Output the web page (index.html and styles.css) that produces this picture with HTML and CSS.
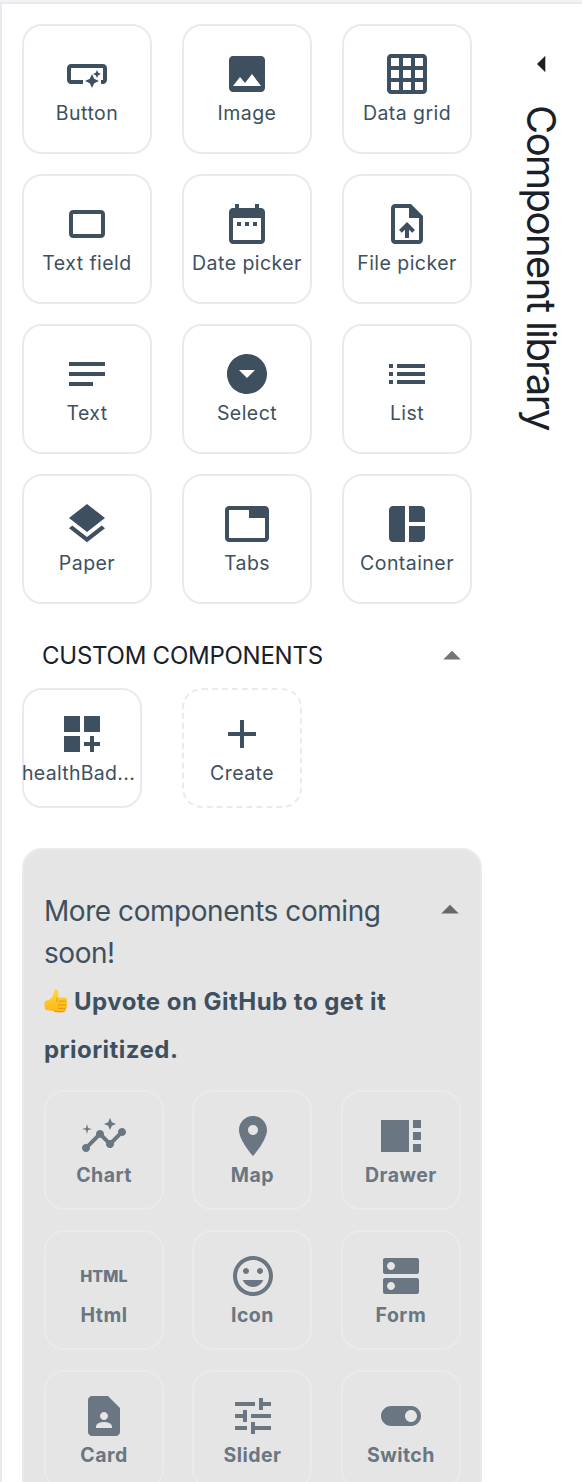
FILE: index.html
```
<!DOCTYPE html>
<html lang="en">
<head>
<meta charset="utf-8">
<title>Component library</title>
<link rel="stylesheet" href="styles.css">
</head>
<body>
<div class="app">
  <main class="catalog">
    <section class="grid">
      <div class="tile"><svg class="icon" viewBox="0 0 24 24"><path d="M22 9v6c0 1.1-.9 2-2 2h-1v-2h1V9H4v6h6v2H4c-1.1 0-2-.9-2-2V9c0-1.1.9-2 2-2h16c1.1 0 2 .9 2 2zm-7.5 10 1.09-2.41L18 15.5l-2.41-1.09L14.5 12l-1.09 2.41L11 15.5l2.41 1.09L14.5 19zm2.5-5 .62-1.38L19 12l-1.38-.62L17 10l-.62 1.38L15 12l1.38.62L17 14z"/></svg><span class="label">Button</span></div>
      <div class="tile"><svg class="icon" viewBox="0 0 24 24"><path d="M21 19V5c0-1.1-.9-2-2-2H5c-1.1 0-2 .9-2 2v14c0 1.1.9 2 2 2h14c1.1 0 2-.9 2-2zM8.5 13.5l2.5 3.01L14.5 12l4.5 6H5l3.5-4.5z"/></svg><span class="label">Image</span></div>
      <div class="tile"><svg class="icon" viewBox="0 0 24 24"><path d="M20 2H4c-1.1 0-2 .9-2 2v16c0 1.1.9 2 2 2h16c1.1 0 2-.9 2-2V4c0-1.1-.9-2-2-2zM8 20H4v-4h4v4zm0-6H4v-4h4v4zm0-6H4V4h4v4zm6 12h-4v-4h4v4zm0-6h-4v-4h4v4zm0-6h-4V4h4v4zm6 12h-4v-4h4v4zm0-6h-4v-4h4v4zm0-6h-4V4h4v4z"/></svg><span class="label">Data grid</span></div>
      <div class="tile"><svg class="icon" viewBox="0 0 24 24"><path d="M19 5H5c-1.1 0-2 .9-2 2v10c0 1.1.9 2 2 2h14c1.1 0 2-.9 2-2V7c0-1.1-.9-2-2-2zm0 12H5V7h14v10z"/></svg><span class="label">Text field</span></div>
      <div class="tile"><svg class="icon" viewBox="0 0 24 24"><path d="M9 11H7v2h2v-2zm4 0h-2v2h2v-2zm4 0h-2v2h2v-2zm2-7h-1V2h-2v2H8V2H6v2H5c-1.11 0-1.99.9-1.99 2L3 20c0 1.1.89 2 2 2h14c1.1 0 2-.9 2-2V6c0-1.1-.9-2-2-2zm0 16H5V9h14v11z"/></svg><span class="label">Date picker</span></div>
      <div class="tile"><svg class="icon" viewBox="0 0 24 24"><path d="M14 2H6c-1.1 0-1.99.9-1.99 2L4 20c0 1.1.89 2 1.99 2H18c1.1 0 2-.9 2-2V8l-6-6zm4 18H6V4h7v5h5v11zM8 15.01l1.41 1.41L11 14.84V19h2v-4.16l1.59 1.59L16 15.01 12.01 11 8 15.01z"/></svg><span class="label">File picker</span></div>
      <div class="tile"><svg class="icon" viewBox="0 0 24 24"><path d="M3 18h12v-2H3v2zM3 6v2h18V6H3zm0 7h18v-2H3v2z"/></svg><span class="label">Text</span></div>
      <div class="tile"><svg class="icon" viewBox="0 0 24 24"><path d="M12 2C6.48 2 2 6.48 2 12s4.48 10 10 10 10-4.48 10-10S17.52 2 12 2zm0 12-4-4h8l-4 4z"/></svg><span class="label">Select</span></div>
      <div class="tile"><svg class="icon" viewBox="0 0 24 24"><path d="M3 13h2v-2H3v2zm0 4h2v-2H3v2zm0-8h2V7H3v2zm4 4h14v-2H7v2zm0 4h14v-2H7v2zM7 7v2h14V7H7z"/></svg><span class="label">List</span></div>
      <div class="tile"><svg class="icon" viewBox="0 0 24 24"><path d="m11.99 18.54-7.37-5.73L3 14.07l9 7 9-7-1.63-1.27-7.38 5.74zM12 16l7.36-5.73L21 9l-9-7-9 7 1.63 1.27L12 16z"/></svg><span class="label">Paper</span></div>
      <div class="tile"><svg class="icon" viewBox="0 0 24 24"><path d="M21 3H3c-1.1 0-2 .9-2 2v14c0 1.1.9 2 2 2h18c1.1 0 2-.9 2-2V5c0-1.1-.9-2-2-2zm0 16H3V5h10v4h8v10z"/></svg><span class="label">Tabs</span></div>
      <div class="tile"><svg class="icon" viewBox="0 0 24 24"><path d="M11 21H5c-1.1 0-2-.9-2-2V5c0-1.1.9-2 2-2h6v18zm2 0h6c1.1 0 2-.9 2-2v-6h-8v8zm8-10V5c0-1.1-.9-2-2-2h-6v8h8z"/></svg><span class="label">Container</span></div>
    </section>

    <header class="section-head">
      <h2 class="section-title">CUSTOM COMPONENTS</h2>
      <svg class="caret" viewBox="0 0 24 24"><path d="m7 14 5-5 5 5z"/></svg>
    </header>
    <section class="custom">
      <div class="tile tile-small"><svg class="icon" viewBox="0 0 24 24"><path d="M3 3h8v8H3zm10 0h8v8h-8zM3 13h8v8H3zm15 0h-2v3h-3v2h3v3h2v-3h3v-2h-3z"/></svg><span class="label label-clipped">healthBad...</span></div>
      <div class="tile tile-small tile-dashed"><svg class="icon" viewBox="0 0 24 24"><path d="M19 13h-6v6h-2v-6H5v-2h6V5h2v6h6v2z"/></svg><span class="label">Create</span></div>
    </section>

    <section class="upcoming">
      <header class="upcoming-head">
        <p class="upcoming-title">More components coming soon!</p>
        <svg class="caret" viewBox="0 0 24 24"><path d="m7 14 5-5 5 5z"/></svg>
      </header>
      <p class="upvote"><svg class="thumb" viewBox="0 0 24 26"><defs><linearGradient id="skin" x1="0" y1="0" x2="0" y2="1"><stop offset="0" stop-color="#ffd83a"/><stop offset="1" stop-color="#fdb714"/></linearGradient></defs><path fill="url(#skin)" d="M1 13.2C3 12 5.6 11.8 7.2 10.2 9 8.3 9.6 5.6 10.2 3 10.6 1 13.7.8 14.3 3.2c.5 2.1 0 4.3-.3 6.2h7c2.4 0 2.9 2.9 1.3 3.7 1.7.9 1.4 3.3 0 3.8 1.2 1 .8 3-.5 3.4.8 1.2 0 3.2-1.7 3.4-3.6.8-8.1.6-10.6-.6C7.2 22 4 22.9 1.4 21.7.2 19.2.2 15.5 1 13.2z"/><path fill="none" stroke="#e08a0c" stroke-width=".8" stroke-linecap="round" d="M13.9 9.6c-1 .9-1.6 2-1.5 3.4M14.4 13.2h7.5M14.2 16.9h7.9M14.4 20.4h7M10.2 23.2c2.8.9 6.8 1 9.8.4"/></svg><span>Upvote on GitHub to get it prioritized.</span></p>
      <div class="soon-grid">
        <div class="tile tile-small soon"><svg class="icon" viewBox="0 0 24 24"><path d="M21 8c-1.45 0-2.26 1.44-1.93 2.51l-3.55 3.56c-.3-.09-.74-.09-1.04 0l-2.55-2.55C12.27 10.45 11.46 9 10 9c-1.45 0-2.27 1.44-1.93 2.52l-4.56 4.55C2.44 15.74 1 16.55 1 18c0 1.1.9 2 2 2 1.45 0 2.26-1.44 1.93-2.51l4.55-4.56c.3.09.74.09 1.04 0l2.55 2.55C12.73 16.55 13.54 18 15 18c1.45 0 2.27-1.44 1.93-2.52l3.56-3.55c1.07.33 2.51-.48 2.51-1.93 0-1.1-.9-2-2-2z"/><path d="m15 9 .94-2.07L18 6l-2.06-.93L15 3l-.92 2.07L12 6l2.08.93zM3.5 11 4 9l2-.5L4 8l-.5-2L3 8l-2 .5L3 9z"/></svg><span class="label">Chart</span></div>
        <div class="tile tile-small soon"><svg class="icon" viewBox="0 0 24 24"><path d="M12 2C8.13 2 5 5.13 5 9c0 5.25 7 13 7 13s7-7.75 7-13c0-3.87-3.13-7-7-7zm0 9.5c-1.38 0-2.5-1.12-2.5-2.5s1.12-2.5 2.5-2.5 2.5 1.12 2.5 2.5-1.12 2.5-2.5 2.5z"/></svg><span class="label">Map</span></div>
        <div class="tile tile-small soon"><svg class="icon" viewBox="0 0 24 24"><path d="M16 20H2V4h14v16zm2-12h4V4h-4v4zm0 12h4v-4h-4v4zm0-6h4v-4h-4v4z"/></svg><span class="label">Drawer</span></div>
        <div class="tile tile-small soon"><svg class="icon" viewBox="0 0 48 48"><text class="html-mark" x="0.3" y="30" textLength="47.2" lengthAdjust="spacingAndGlyphs">HTML</text></svg><span class="label">Html</span></div>
        <div class="tile tile-small soon"><svg class="icon" viewBox="0 0 24 24"><path d="M11.99 2C6.47 2 2 6.48 2 12s4.47 10 9.99 10C17.52 22 22 17.52 22 12S17.52 2 11.99 2zM12 20c-4.42 0-8-3.58-8-8s3.58-8 8-8 8 3.58 8 8-3.58 8-8 8zm3.5-9c.83 0 1.5-.67 1.5-1.5S16.33 8 15.5 8 14 8.67 14 9.5s.67 1.5 1.5 1.5zm-7 0c.83 0 1.5-.67 1.5-1.5S9.33 8 8.5 8 7 8.67 7 9.5 7.67 11 8.5 11zm3.5 6.5c2.33 0 4.31-1.46 5.11-3.5H6.89c.8 2.04 2.78 3.5 5.11 3.5z"/></svg><span class="label">Icon</span></div>
        <div class="tile tile-small soon"><svg class="icon" viewBox="0 0 24 24"><path d="M20 13H4c-.55 0-1 .45-1 1v6c0 .55.45 1 1 1h16c.55 0 1-.45 1-1v-6c0-.55-.45-1-1-1zM7 19c-1.1 0-2-.9-2-2s.9-2 2-2 2 .9 2 2-.9 2-2 2zM20 3H4c-.55 0-1 .45-1 1v6c0 .55.45 1 1 1h16c.55 0 1-.45 1-1V4c0-.55-.45-1-1-1zM7 9c-1.1 0-2-.9-2-2s.9-2 2-2 2 .9 2 2-.9 2-2 2z"/></svg><span class="label">Form</span></div>
        <div class="tile tile-small soon"><svg class="icon" viewBox="0 0 24 24"><path d="M14 2H6c-1.1 0-2 .9-2 2v16c0 1.1.9 2 2 2h12c1.1 0 2-.9 2-2V8l-6-6zm-2 8c1.1 0 2 .9 2 2s-.9 2-2 2-2-.9-2-2 .9-2 2-2zm4 8H8v-.57c0-.81.48-1.53 1.22-1.85.85-.37 1.79-.58 2.78-.58.99 0 1.93.21 2.78.58.74.32 1.22 1.04 1.22 1.85V18z"/></svg><span class="label">Card</span></div>
        <div class="tile tile-small soon"><svg class="icon" viewBox="0 0 24 24"><path d="M3 17v2h6v-2H3zM3 5v2h10V5H3zm10 16v-2h8v-2h-8v-2h-2v6h2zM7 9v2H3v2h4v2h2V9H7zm14 4v-2H11v2h10zm-6-4h2V7h4V5h-4V3h-2v6z"/></svg><span class="label">Slider</span></div>
        <div class="tile tile-small soon"><svg class="icon" viewBox="0 0 24 24"><path d="M17 7H7c-2.76 0-5 2.24-5 5s2.24 5 5 5h10c2.76 0 5-2.24 5-5s-2.24-5-5-5zm0 8c-1.66 0-3-1.34-3-3s1.34-3 3-3 3 1.34 3 3-1.34 3-3 3z"/></svg><span class="label">Switch</span></div>
      </div>
    </section>
  </main>
  <aside class="rail">
    <svg class="rail-arrow" viewBox="0 0 24 24"><path d="m14 7-5 5 5 5V7z"/></svg>
    <h1 class="rail-title">Component library</h1>
  </aside>
</div>
</body>
</html>
```
FILE: styles.css
```
* { box-sizing: border-box; }
body {
  margin: 0;
  height: 1482px;
  overflow: hidden;
  padding-top: 2px;
  background: #f3f3f3;
  font-family: Inter, sans-serif;
  color: #1a2027;
}
h1, h2, p { margin: 0; font-weight: 400; }
svg { display: block; flex: none; }
.app {
  display: flex;
  height: 1480px;
  background: #fff;
  border-top: 2px solid #e7ebf0;
  border-left: 2px solid #e7ebf0;
}
.catalog { width: 480px; padding: 20px 0 0 20px; }
.grid {
  display: grid;
  grid-template-columns: repeat(3, 130px);
  grid-auto-rows: 130px;
  gap: 20px 30px;
}
.tile {
  display: flex;
  flex-direction: column;
  align-items: center;
  padding-top: 24px;
  border: 2px solid #e7ebf0;
  border-radius: 20px;
  color: #3e5060;
}
.tile-small { width: 120px; height: 120px; padding-top: 20px; }
.tile-dashed { border-style: dashed; }
.icon { width: 48px; height: 48px; fill: currentColor; }
.label {
  font-size: 19.5px;
  line-height: 30px;
  letter-spacing: 0.45px;
  white-space: nowrap;
}
.label-clipped { width: 120px; overflow: hidden; letter-spacing: 0.3px; }
.section-head {
  display: flex;
  align-items: center;
  justify-content: space-between;
  height: 84px;
  padding: 20px 9px 0 20px;
}
.section-title { font-size: 24px; line-height: 36px; letter-spacing: -0.25px; }
.caret { width: 42px; height: 42px; fill: #757575; }
.custom { display: flex; gap: 40px; }
.upcoming {
  width: 460px;
  height: 700px;
  margin-top: 40px;
  padding: 40px 0 0 20px;
  background: #e5e5e5;
  border: 2px solid #e7ebf0;
  border-radius: 20px;
  color: #3e5060;
}
.upcoming-head {
  display: flex;
  justify-content: space-between;
  padding-right: 9px;
}
.upcoming-head .caret { margin-top: -1px; fill: #696969; }
.upcoming-title {
  width: 360px;
  font-size: 28px;
  line-height: 42px;
  letter-spacing: -0.45px;
}
.upvote {
  width: 400px;
  margin-top: 4px;
  font-size: 24px;
  line-height: 48px;
  letter-spacing: 0.47px;
}
.upvote span { font-weight: 700; }
.thumb {
  display: inline-block;
  width: 24px;
  height: 26px;
  margin-right: 6px;
  vertical-align: -4px;
}
.soon-grid {
  display: grid;
  grid-template-columns: repeat(3, 120px);
  gap: 20px 28.45px;
  margin-top: 16px;
}
.soon { color: #6a7681; }
.soon .icon { margin-left: 0.3px; }
.soon .label { font-weight: 700; }
.html-mark { font: 800 16.5px Inter, sans-serif; }
.rail { flex: 1; padding-top: 40px; }
.rail-arrow { width: 40px; height: 40px; margin-left: 40px; fill: #1a2027; }
.rail-title {
  margin: 21px 0 0 34.5px;
  writing-mode: vertical-rl;
  font-size: 40px;
  line-height: 48px;
  letter-spacing: -1.55px;
  white-space: nowrap;
}
```
